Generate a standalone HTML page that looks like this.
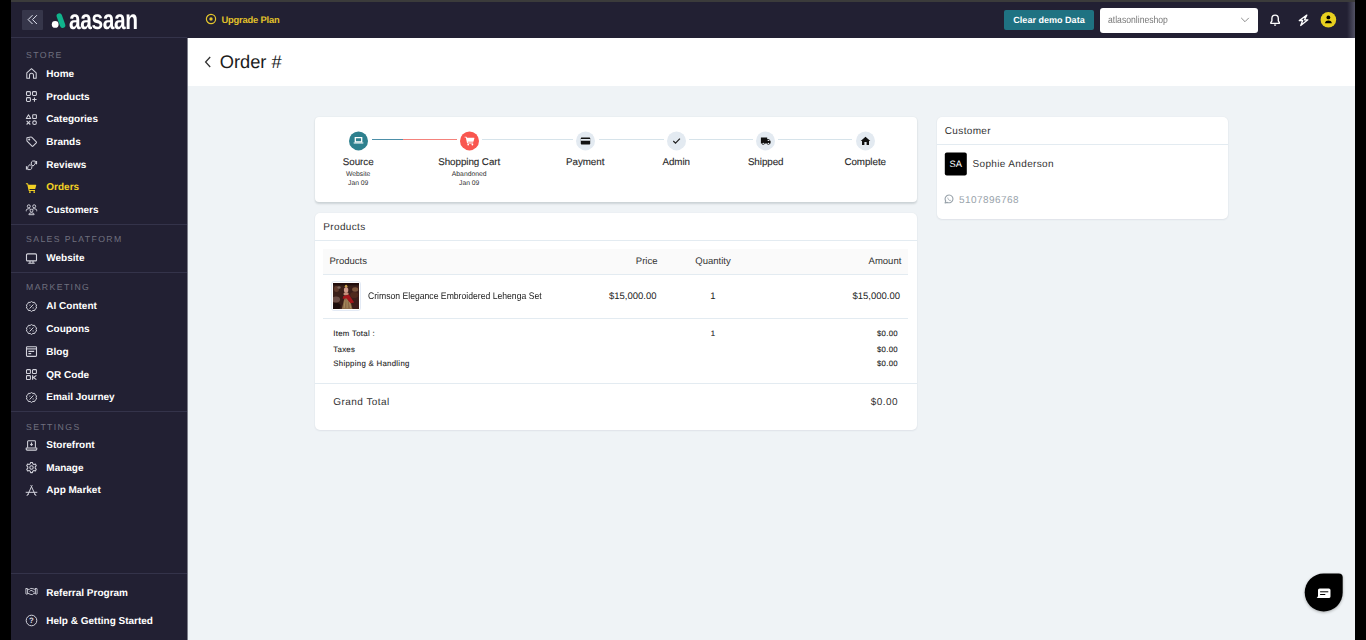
<!DOCTYPE html>
<html lang="en">
<head>
<meta charset="utf-8">
<title>Order # - aasaan</title>
<style>
*{box-sizing:border-box;margin:0;padding:0}
html,body{text-rendering:geometricPrecision;width:1366px;height:640px;overflow:hidden;background:#000;font-family:"Liberation Sans",Arial,sans-serif;}
#app{position:absolute;left:11px;top:0;width:1344px;height:640px;background:#eff3f6;overflow:hidden}
#chrome{position:absolute;left:0;top:0;width:1344px;height:2px;background:#3b3b3b;z-index:50}
#topbar{position:absolute;left:0;top:2px;width:1344px;height:36px;background:#222033;z-index:20}
#topbar .edge{position:absolute;right:0;top:0;width:8px;height:36px;background:linear-gradient(90deg,rgba(120,122,140,0) 0%,rgba(120,122,140,.55) 100%)}
#sidebar{position:absolute;left:0;top:37px;width:176px;height:603px;background:#222033;z-index:30;border-top:1px solid #34334a}
#sbw{position:absolute;left:0;top:1px;width:176px;height:0}
.abs{position:absolute;white-space:nowrap}
/* header */
#collapse{position:absolute;left:11px;top:8px;width:20.500px;height:20px;background:#36364a;border-radius:1px}
#logo-text{left:58px;top:1.8px;font-weight:bold;font-size:27.5px;line-height:32px;color:#fff;letter-spacing:-.5px;transform:scaleX(.76);transform-origin:0 0}
#upgrade{left:210.4px;top:10.5px;font-size:9.4px;line-height:14px;color:#e0c02a;font-weight:bold;letter-spacing:-.2px}
#clear{position:absolute;left:993px;top:7.700px;width:90px;height:20.300px;background:#1f7282;border-radius:2px;color:#fff;font-size:9.050px;line-height:21.600px;text-align:center;font-weight:bold}
#store{position:absolute;left:1089px;top:5.600px;width:157.500px;height:25.200px;background:#fff;border-radius:3px}
#store span{left:8.400px;top:6.300px;font-size:10px;line-height:14px;color:#777;transform:scaleX(.862);transform-origin:0 50%}
/* sidebar */
.sec{left:15px;font-size:8.7px;line-height:12px;color:#70707f;letter-spacing:1.4px}
.it{left:35.3px;font-size:10px;line-height:15px;color:#fff;font-weight:bold}
.it.on{color:#f2d024}
.ic{position:absolute;left:14px;width:13px;height:13px}
.hr{position:absolute;left:0;width:176px;height:1px;background:#34334a}
/* main */
#titlebar{position:absolute;left:176px;top:38px;width:1168px;height:48px;background:#fff}
#title{left:32.700px;top:11px;font-size:18.300px;line-height:26px;color:#1c1c1c}
.card{position:absolute;background:#fff;border-radius:5px;box-shadow:0 1px 2px rgba(40,60,80,.07),0 0 2px rgba(40,60,80,.05)}
#stepper{border-radius:4px;box-shadow:0 1.500px 2px rgba(30,40,50,.15),0 0 2px rgba(40,60,80,.06)}
.t{color:#333}

.ln{position:absolute;top:22px;height:1px}
.ln.lt{background:#d6e3ea}
.dot{position:absolute;top:14px;transform:translateY(.4px);width:19px;height:19px;border-radius:50%}
.dot.g{background:#e3eaf1}
.dot svg{position:absolute;left:0;top:0;width:19px;height:19px}
.sl{top:40px;font-size:9.8px;line-height:12px;color:#2a2a2a;letter-spacing:-.05px;-webkit-text-stroke:.12px #2a2a2a;transform:translateX(-50%)}
.ss{font-size:6.8px;line-height:9px;color:#333;transform:translateX(-50%)}
.ch{font-size:10px;line-height:14px;color:#333;letter-spacing:.35px}
.hl{position:absolute;height:1px;background:#e3ebf1}
.th{font-size:9.5px;line-height:14px;color:#333}
.td{font-size:9.5px;line-height:14px;color:#222}
#pname{transform:scaleX(.908);transform-origin:0 50%}
#thumb{position:absolute;left:16.200px;top:68.200px;width:29.600px;height:29.600px;border:1px solid #e3eaf5;border-radius:3px;padding:.700px;background:#fff}
#thumb svg{display:block}
.tt{font-size:7.8px;line-height:10px;color:#1c1c1c;letter-spacing:.3px;-webkit-text-stroke:.1px #1c1c1c}
.gt{font-size:10px;line-height:14px;color:#333;letter-spacing:.45px}
#avatar{position:absolute;left:0;top:0;transform:translate(7.800px,35.400px);width:22.800px;height:23px;background:#000;border-radius:2px;color:#fff;font-size:9.300px;line-height:24.200px;text-align:center}
#chat{position:absolute;left:0;top:0;transform:translate(1293.700px,573.500px);width:38px;height:38px;background:#000;border-radius:19px 4px 19px 19px;box-shadow:0 1px 3px rgba(0,0,0,.3)}
</style>
</head>
<body>
<div id="app">
  <div id="chrome"></div>

  <!-- TOP BAR -->
  <div id="topbar">
    <div id="collapse">
      <svg width="20" height="20" viewBox="0 0 20 20"><path d="M10.500 5.200 6.100 9.600 10.500 14M14.900 5.200 10.500 9.600 14.900 14" fill="none" stroke="#e3e6f2" stroke-width="1"/></svg>
    </div>
    <svg class="abs" style="left:40px;top:9px" width="16" height="18" viewBox="0 0 16 18">
      <path d="M8.3 5 11.6 14.1" stroke="#10b38c" stroke-width="5.4" stroke-linecap="round" fill="none"/>
      <circle cx="4.2" cy="13.4" r="3.4" fill="#fff"/>
    </svg>
    <div id="logo-text" class="abs">aasaan</div>
    <svg class="abs" style="left:194px;top:11px" width="12" height="12" viewBox="0 0 12 12"><circle cx="6" cy="6" r="4.6" fill="none" stroke="#e4c62c" stroke-width="1.2"/><circle cx="6" cy="6" r="1.7" fill="#e4c62c"/></svg>
    <div id="upgrade" class="abs">Upgrade Plan</div>
    <div id="clear">Clear demo Data</div>
    <div id="store"><span class="abs">atlasonlineshop</span>
      <svg class="abs" style="left:140.200px;top:9px" width="10" height="6" viewBox="0 0 10 6"><path d="M1.200 .9 5 4.700 8.800 .9" fill="none" stroke="#8a8a8a" stroke-width="1"/></svg>
    </div>
    <svg class="abs" style="left:1257px;top:10px" width="14" height="16" viewBox="0 0 14 16"><path d="M7.100 3.100c-2 0-3.200 1.500-3.200 3.400v2.400L2.800 10.700v.6h8.600v-.6L10.300 8.900V6.500c0-1.900-1.200-3.400-3.200-3.400Z" fill="none" stroke="#fff" stroke-width="1.350" stroke-linejoin="round"/><path d="M5.900 12.500h2.400c0 .8-.5 1.300-1.200 1.300s-1.200-.5-1.200-1.300Z" fill="#fff"/></svg>
    <svg class="abs" style="left:1285px;top:10px" width="14" height="16" viewBox="0 0 14 16"><path d="M10.800 3.100 3.300 8.500H6.700L4.700 13.500 11.900 7.800H8.500Z" fill="none" stroke="#fff" stroke-width="1.300" stroke-linejoin="round"/></svg>
    <svg class="abs" style="left:1308px;top:9px" width="19" height="19" viewBox="0 0 19 19"><g transform="translate(.9 .3)"><circle cx="8.500" cy="8.500" r="7.800" fill="#e8d01f"/><circle cx="8.500" cy="6.100" r="1.900" fill="#000"/><path d="M5 11.900c.4-1.900 1.700-2.600 3.500-2.600s3.100.7 3.500 2.600Z" fill="#000"/></g></svg>
    <div class="edge"></div>
  </div>

  <!-- SIDEBAR -->
  <div id="sidebar"><div id="sbw">
  <svg width="0" height="0" style="position:absolute">
    <defs>
      <g id="i-home" fill="none" stroke="#d3d3dc" stroke-width="1.05" stroke-linejoin="round"><path d="M1.800 5.900 6.500 1.700 11.200 5.900V11.300H8.500V8.300a2 2 0 0 0-4 0v3H1.800Z"/></g>
      <g id="i-products" fill="none" stroke="#d3d3dc" stroke-width="1.050"><rect x="1.500" y="1.600" width="3.900" height="3.900" rx=".9"/><rect x="7.500" y="1.600" width="3.900" height="3.900" rx=".9"/><rect x="1.500" y="7.600" width="3.900" height="3.900" rx=".9"/><path d="M9.450 7.400v4.300M7.300 9.550h4.300"/></g>
      <g id="i-categories" fill="none" stroke="#d3d3dc" stroke-width="1.050" stroke-linejoin="round"><path d="M3.500 1.700 5.700 5.400H1.300Z"/><rect x="7.700" y="1.700" width="3.700" height="3.700" rx=".5"/><path d="M1.600 7.900 5.300 11.500M5.300 7.900 1.600 11.500"/><circle cx="9.550" cy="9.700" r="1.850"/></g>
      <g id="i-brands" fill="none" stroke="#d3d3dc" stroke-width="1.050" stroke-linejoin="round"><path d="M1.900 2.800 5.900 2.100Q6.500 2 6.900 2.400L11.300 6.800Q11.800 7.300 11.300 7.800L8 11.100Q7.500 11.600 7 11.100L2.300 6.400Q1.900 6 1.900 5.500Z"/><circle cx="4.200" cy="4.400" r=".5" fill="#d3d3dc"/></g>
      <g id="i-reviews" fill="none" stroke="#d3d3dc" stroke-width="1" stroke-linejoin="round" stroke-linecap="round"><path d="M3.100 8.300 5.100 6.500 6.900 8.500 6.600 10.700 5.400 11.600H3.100Z"/><path d="M1.500 8.200V11.600" stroke-width="1.200" stroke-linecap="butt"/><path d="M9.900 6.300 7.900 8.100 6.200 6.100 6.500 3.900 7.700 3H9.900Z"/><path d="M11.500 3V6.300" stroke-width="1.200" stroke-linecap="butt"/></g>
      <g id="i-orders" fill="#f2d024" stroke="none"><path d="M.9 2.300H2.600Q3.100 2.300 3.200 2.800L3.400 3.700H10.900Q11.400 3.700 11.250 4.200L10.300 7.700Q10.200 8.100 9.700 8.100H4.400L4.600 9H10V9.900H4.200Q3.700 9.900 3.600 9.400L2.200 3.200H.9Z"/><circle cx="4.900" cy="11.100" r=".95"/><circle cx="9.200" cy="11.100" r=".95"/></g>
      <g id="i-customers" fill="none" stroke="#d3d3dc" stroke-width=".95" stroke-linejoin="round"><circle cx="3.800" cy="3.300" r="1.500"/><circle cx="9.200" cy="3.300" r="1.500"/><path d="M1.300 8.300V7.300Q1.300 5.700 3.800 5.700 5.200 5.700 5.700 6.400M11.700 8.300V7.300Q11.700 5.700 9.200 5.700 7.800 5.700 7.300 6.400"/><circle cx="6.500" cy="7.700" r="1.400"/><path d="M3.900 11.700V11.200Q3.900 9.900 6.500 9.900T9.100 11.200V11.700Z"/></g>
      <g id="i-website" fill="none" stroke="#d3d3dc" stroke-width="1.100" stroke-linejoin="round"><rect x="1.500" y="1.900" width="10" height="7" rx="1"/><path d="M3.300 11.300H9.700M5 9V11.300M8 9V11.300"/></g>
      <g id="i-badge" fill="none" stroke="#d3d3dc" stroke-width="1" stroke-linejoin="round"><path d="M6.500 1.200 7.900 2.100 9.600 2 10.200 3.500 11.600 4.500 11.100 6.100 11.600 7.700 10.200 8.700 9.600 10.200 7.900 10.100 6.500 11.100 5.100 10.100 3.400 10.200 2.800 8.700 1.400 7.700 1.900 6.100 1.400 4.500 2.800 3.500 3.400 2 5.100 2.100Z" transform="translate(0 .35)"/><path d="M4.600 8.500 8.400 4.500"/><circle cx="4.900" cy="5.100" r=".55" fill="#d3d3dc" stroke="none"/><circle cx="8.100" cy="7.900" r=".55" fill="#d3d3dc" stroke="none"/></g>
      <g id="i-blog" fill="none" stroke="#d3d3dc" stroke-width="1.100" stroke-linejoin="round"><rect x="1.500" y="1.700" width="10" height="9.700" rx=".8"/><path d="M1.500 3.900H11.500"/><path d="M3.400 6.300H9.200M3.400 8.700H6.200" stroke-width="1.200"/></g>
      <g id="i-qr" fill="none" stroke="#d3d3dc" stroke-width="1.050"><rect x="1.500" y="1.600" width="3.900" height="3.900" rx=".7"/><rect x="7.500" y="1.600" width="3.900" height="3.900" rx=".7"/><rect x="1.500" y="7.600" width="3.900" height="3.900" rx=".7"/><path d="M7.600 7.300V11.800M11.400 7.400 8.400 9.500 11.400 11.600" stroke-width="1.150"/></g>
      <g id="i-storefront" fill="none" stroke="#d3d3dc" stroke-width="1.050" stroke-linejoin="round"><path d="M2.600 8.700V2.600Q2.600 1.800 3.400 1.800H9.600Q10.400 1.800 10.400 2.600V8.700"/><path d="M1.200 8.900H11.800V10.100Q11.800 11.100 10.800 11.100H2.200Q1.200 11.100 1.200 10.100Z"/><path d="M6.500 3.400V6.300M5.300 5.200 6.500 6.400 7.700 5.200"/></g>
      <g id="i-manage" fill="none" stroke="#d3d3dc" stroke-width="1.050" stroke-linejoin="round"><path d="M5.600 1.400H7.400L7.800 2.900 8.900 3.500 10.400 3.100 11.300 4.700 10.200 5.800V7.200L11.300 8.300 10.400 9.900 8.900 9.500 7.800 10.100 7.400 11.600H5.600L5.200 10.100 4.100 9.500 2.600 9.900 1.700 8.300 2.800 7.200V5.800L1.700 4.700 2.600 3.100 4.100 3.500 5.200 2.900Z"/><circle cx="6.500" cy="6.500" r="1.700"/></g>
      <g id="i-appmarket" fill="none" stroke="#d3d3dc" stroke-width="1" stroke-linecap="round"><path d="M6.500 2.600 2.700 10.900M6.500 2.600 10.300 10.900M5.900 1.600 6.500 2.600 7.100 1.600M1.100 8.300H11.900M2.100 11.500 3.300 10.300M10.900 11.500 9.700 10.300"/></g>
      <g id="i-referral" fill="none" stroke="#d3d3dc" stroke-width=".9" stroke-linejoin="round" stroke-linecap="round"><rect x=".9" y="3.500" width="1.700" height="5.600" rx=".3"/><rect x="10.400" y="3.500" width="1.700" height="5.600" rx=".3"/><path d="M2.900 4.400H4.300Q5.600 2.900 7 3.500L10.100 4.400M10.100 8.300H8.900Q7.500 10.300 6 9.500L2.900 8.300"/><path d="M4.700 6.300Q6 4.500 7.100 5.700T9 7"/></g>
      <g id="i-help"><circle cx="6.500" cy="6.500" r="5.300" fill="none" stroke="#d3d3dc" stroke-width="1"/><text x="6.500" y="9.300" text-anchor="middle" font-family="Liberation Sans, sans-serif" font-size="7.800" font-weight="bold" fill="#dcdce4">?</text></g>
    </defs>
  </svg>
    <div class="abs sec" style="top:10.0px">STORE</div>
    <svg class="ic" style="top:28.2px" viewBox="0 0 13 13"><use href="#i-home"/></svg><div class="abs it" style="top:27.8px">Home</div>
    <svg class="ic" style="top:51.1px" viewBox="0 0 13 13"><use href="#i-products"/></svg><div class="abs it" style="top:50.6px">Products</div>
    <svg class="ic" style="top:73.8px" viewBox="0 0 13 13"><use href="#i-categories"/></svg><div class="abs it" style="top:73.3px">Categories</div>
    <svg class="ic" style="top:96.4px" viewBox="0 0 13 13"><use href="#i-brands"/></svg><div class="abs it" style="top:95.9px">Brands</div>
    <svg class="ic" style="top:119.1px" viewBox="0 0 13 13"><use href="#i-reviews"/></svg><div class="abs it" style="top:118.6px">Reviews</div>
    <svg class="ic" style="top:141.7px" viewBox="0 0 13 13"><use href="#i-orders"/></svg><div class="abs it on" style="top:141.2px">Orders</div>
    <svg class="ic" style="top:164.2px" viewBox="0 0 13 13"><use href="#i-customers"/></svg><div class="abs it" style="top:163.7px">Customers</div>
    <div class="hr" style="top:185px"></div>
    <div class="abs sec" style="top:194.4px">SALES PLATFORM</div>
    <svg class="ic" style="top:212.6px" viewBox="0 0 13 13"><use href="#i-website"/></svg><div class="abs it" style="top:212.1px">Website</div>
    <div class="hr" style="top:233px"></div>
    <div class="abs sec" style="top:242.2px">MARKETING</div>
    <svg class="ic" style="top:260.8px" viewBox="0 0 13 13"><use href="#i-badge"/></svg><div class="abs it" style="top:260.3px">AI Content</div>
    <svg class="ic" style="top:283.7px" viewBox="0 0 13 13"><use href="#i-badge"/></svg><div class="abs it" style="top:283.2px">Coupons</div>
    <svg class="ic" style="top:306.4px" viewBox="0 0 13 13"><use href="#i-blog"/></svg><div class="abs it" style="top:305.9px">Blog</div>
    <svg class="ic" style="top:329.0px" viewBox="0 0 13 13"><use href="#i-qr"/></svg><div class="abs it" style="top:328.5px">QR Code</div>
    <svg class="ic" style="top:351.8px" viewBox="0 0 13 13"><use href="#i-badge"/></svg><div class="abs it" style="top:351.3px">Email Journey</div>
    <div class="hr" style="top:372px"></div>
    <div class="abs sec" style="top:381.8px">SETTINGS</div>
    <svg class="ic" style="top:399.5px" viewBox="0 0 13 13"><use href="#i-storefront"/></svg><div class="abs it" style="top:399.0px">Storefront</div>
    <svg class="ic" style="top:421.6px" viewBox="0 0 13 13"><use href="#i-manage"/></svg><div class="abs it" style="top:422.1px">Manage</div>
    <svg class="ic" style="top:444.6px" viewBox="0 0 13 13"><use href="#i-appmarket"/></svg><div class="abs it" style="top:444.1px">App Market</div>
    <div class="hr" style="top:534px"></div>
    <svg class="ic" style="top:546.4px" viewBox="0 0 13 13"><use href="#i-referral"/></svg><div class="abs it" style="top:547.2px">Referral Program</div>
    <svg class="ic" style="top:575.2px" viewBox="0 0 13 13"><use href="#i-help"/></svg><div class="abs it" style="top:574.7px">Help &amp; Getting Started</div>
  </div></div>

  <div style="position:absolute;left:176px;top:38px;width:1px;height:602px;background:#7d7e8a;z-index:31"></div>
  <!-- TITLE BAR -->
  <div id="titlebar">
    <svg class="abs" style="left:17px;top:17px" width="8" height="14" viewBox="0 0 8 14"><path d="M6.200 2 1.600 7l4.600 5" fill="none" stroke="#333" stroke-width="1.300"/></svg>
    <div id="title" class="abs">Order #</div>
  </div>

  <!-- CONTENT -->
  <div id="content">
    <!-- STEPPER CARD -->
    <div class="card" id="stepper" style="left:304px;top:117px;width:602px;height:85px">
      <div class="ln" style="left:56.700px;width:31px;background:#4d8fa8"></div>
      <div class="ln" style="left:87.700px;width:54.500px;background:#f4827c"></div>
      <div class="ln lt" style="left:167px;width:91px"></div>
      <div class="ln lt" style="left:283.700px;width:65px"></div>
      <div class="ln lt" style="left:374.200px;width:63.800px"></div>
      <div class="ln lt" style="left:463px;width:74px"></div>

      <div class="dot" style="left:33.700px;background:#2e808e"><svg viewBox="0 0 19 19"><path d="M6.300 6.300H12.700V10.400H6.300Z" fill="none" stroke="#fff" stroke-width="1.300"/><path d="M4.600 11H14.400V11.600Q14.400 12.200 13.800 12.200H5.200Q4.600 12.200 4.600 11.600Z" fill="#fff"/></svg></div>
      <div class="dot" style="left:144.700px;background:#f9564f"><svg viewBox="0 0 19 19"><path d="M4.600 5.300H6.200Q6.600 5.300 6.700 5.700L6.900 6.400H14.100Q14.600 6.400 14.400 6.900L13.500 10Q13.400 10.400 12.900 10.400H7.800L7.900 11.100H13.200V12H7.500Q7.100 12 7 11.600L5.800 6.200H4.600Z" fill="#fff"/><circle cx="8.200" cy="13.200" r=".9" fill="#fff"/><circle cx="12.400" cy="13.200" r=".9" fill="#fff"/></svg></div>
      <div class="dot g" style="left:260.700px"><svg viewBox="0 0 19 19"><path d="M5.500 6H13.500Q14.200 6 14.200 6.700V12.300Q14.200 13 13.500 13H5.500Q4.800 13 4.800 12.300V6.700Q4.800 6 5.500 6Z" fill="#111"/><path d="M4.800 7.700H14.200V9.300H4.800Z" fill="#e3eaf1"/></svg></div>
      <div class="dot g" style="left:351.700px"><svg viewBox="0 0 19 19"><path d="M6.300 9.600 8.500 11.700 12.900 7.200" fill="none" stroke="#222" stroke-width="1.300"/></svg></div>
      <div class="dot g" style="left:441.200px"><svg viewBox="0 0 19 19"><path d="M4.900 6H11.200V7.700H12.900L14.600 9.700V12H13.700A1.300 1.300 0 0 1 11.100 12H8.500A1.300 1.300 0 0 1 5.900 12H4.900Z" fill="#111"/><circle cx="7.200" cy="12.100" r=".75" fill="#e3eaf1"/><circle cx="12.400" cy="12.100" r=".75" fill="#e3eaf1"/><path d="M11.700 8.300H12.700L13.800 9.700H11.700Z" fill="#e3eaf1"/></svg></div>
      <div class="dot g" style="left:540.700px"><svg viewBox="0 0 19 19"><path d="M9.500 5.300 14.300 9.600H13V13.500H10.600V10.700H8.400V13.500H6V9.600H4.700Z" fill="#111"/></svg></div>

      <div class="abs sl" style="left:43.200px">Source</div>
      <div class="abs sl" style="left:154.200px">Shopping Cart</div>
      <div class="abs sl" style="left:270.200px">Payment</div>
      <div class="abs sl" style="left:361.200px">Admin</div>
      <div class="abs sl" style="left:450.700px">Shipped</div>
      <div class="abs sl" style="left:550.200px">Complete</div>
      <div class="abs ss" style="left:43.200px;top:52.700px">Website</div>
      <div class="abs ss" style="left:43.200px;top:62.200px">Jan 09</div>
      <div class="abs ss" style="left:154.200px;top:52.700px">Abandoned</div>
      <div class="abs ss" style="left:154.200px;top:62.200px">Jan 09</div>
    </div>

    <!-- PRODUCTS CARD -->
    <div class="card" id="products" style="left:304px;top:213px;width:602px;height:217px">
      <div class="abs ch" style="left:8.300px;top:7.500px">Products</div>
      <div class="hl" style="left:0;top:27px;width:602px"></div>
      <div id="thead" style="position:absolute;left:8.300px;top:36px;width:585.200px;height:25.500px;background:#fafafa;border-bottom:1px solid #e3ebf1"></div>
      <div class="abs th" style="left:14.500px;top:42px">Products</div>
      <div class="abs th" style="right:259.500px;top:42px">Price</div>
      <div class="abs th" style="left:398px;top:42px;transform:translateX(-50%)">Quantity</div>
      <div class="abs th" style="right:15.700px;top:42px">Amount</div>

      <div id="thumb"><svg width="26.200" height="26.200" viewBox="0 0 26 26"><defs><filter id="bl" x="-10%" y="-10%" width="120%" height="120%"><feGaussianBlur stdDeviation=".6"/></filter><clipPath id="tc"><rect width="26" height="26"/></clipPath></defs><rect width="26" height="26" fill="#3a1f1a"/><g clip-path="url(#tc)"><g filter="url(#bl)"><rect x="-2" y="-2" width="30" height="4.500" fill="#24110f"/><ellipse cx="3.500" cy="6" rx="2.500" ry="3" fill="#5e3a2e"/><ellipse cx="6" cy="4.500" rx="1.600" ry="1.200" fill="#7d665c"/><ellipse cx="22" cy="6.500" rx="3" ry="2.200" fill="#7b563d"/><ellipse cx="21" cy="12" rx="4" ry="3" fill="#50291f"/><ellipse cx="3" cy="16.500" rx="4" ry="3" fill="#6b4e47"/><ellipse cx="3" cy="23" rx="4.500" ry="3.500" fill="#1f0d0b"/><ellipse cx="22.500" cy="21" rx="4" ry="5" fill="#3d1f1a"/><ellipse cx="13" cy="3.200" rx="1.300" ry="1.500" fill="#c7a04a"/><ellipse cx="13" cy="7" rx="2.200" ry="2.800" fill="#cf9a8a"/><ellipse cx="13" cy="10.800" rx="2.700" ry="1.600" fill="#c48e7a"/><path d="M11.500 14.500H16.500L19.500 26.500H8.500Z" fill="#8b6a48"/><path d="M12 17 11 25M14 16V25M16 17 17.500 25" stroke="#a88e60" stroke-width="1" fill="none"/><path d="M10 13.200 15.800 11.300 21 19.300 17.300 20.200 13.300 15.200 9.600 15.800Z" fill="#a3141b"/></g></g></svg></div>
      <div class="abs td" id="pname" style="left:52.500px;top:77px">Crimson Elegance Embroidered Lehenga Set</div>
      <div class="abs td n" style="right:260.500px;top:77px">$15,000.00</div>
      <div class="abs td n" style="left:398px;top:77px;transform:translateX(-50%)">1</div>
      <div class="abs td n" style="right:17px;top:77px">$15,000.00</div>
      <div class="hl" style="left:8.300px;top:105px;width:585.200px"></div>

      <div class="abs tt" style="left:18.300px;top:115.500px">Item Total :</div>
      <div class="abs tt" style="left:18.300px;top:131.900px">Taxes</div>
      <div class="abs tt" style="left:18.300px;top:145.500px">Shipping &amp; Handling</div>
      <div class="abs tt" style="left:398px;top:115.500px;transform:translateX(-50%)">1</div>
      <div class="abs tt" style="right:19px;top:115.500px">$0.00</div>
      <div class="abs tt" style="right:19px;top:131.900px">$0.00</div>
      <div class="abs tt" style="right:19px;top:145.500px">$0.00</div>
      <div class="hl" style="left:0;top:170px;width:602px"></div>
      <div class="abs gt" style="left:18.300px;top:182.900px">Grand Total</div>
      <div class="abs gt" style="right:19px;top:182.900px">$0.00</div>
    </div>

    <!-- CUSTOMER CARD -->
    <div class="card" id="customer" style="left:925.500px;top:117px;width:291.500px;height:101.600px">
      <div class="abs ch" style="left:8.300px;top:8.200px">Customer</div>
      <div class="hl" style="left:0;top:27px;width:291.500px"></div>
      <div id="avatar">SA</div>
      <div class="abs ch" style="left:36px;top:41px">Sophie Anderson</div>
      <svg class="abs" style="left:7.800px;top:77px" width="10" height="10" viewBox="0 0 10 10"><path d="M5.100 1A3.900 3.900 0 0 0 1.700 6.900L1.100 9 3.300 8.400A3.900 3.900 0 1 0 5.100 1Z" fill="none" stroke="#98a2aa" stroke-width="1.100" stroke-linejoin="round"/><path d="M3.500 3.200Q3.200 4.800 4.600 6T7 6.700L6.400 5.700 5.600 6.100 4.200 4.700 4.500 3.900Z" fill="#98a2aa"/></svg>
      <div class="abs ch" style="left:22.500px;top:76.500px;color:#98a2aa;letter-spacing:.43px">5107896768</div>
    </div>

    <!-- CHAT BUTTON -->
    <div id="chat"><svg width="38" height="38" viewBox="0 0 38 38"><path d="M13.300 16.600Q13.300 14.900 15 14.900H24.100Q25.800 14.900 25.800 16.600V22.900Q25.800 24.600 24.100 24.600H11.900Q13.300 23.600 13.300 22.300Z" fill="#fff"/><path d="M15.400 18.300H23.600M15.400 21H20.600" stroke="#000" stroke-width="1"/></svg></div>
  </div>
</div>
</body>
</html>
